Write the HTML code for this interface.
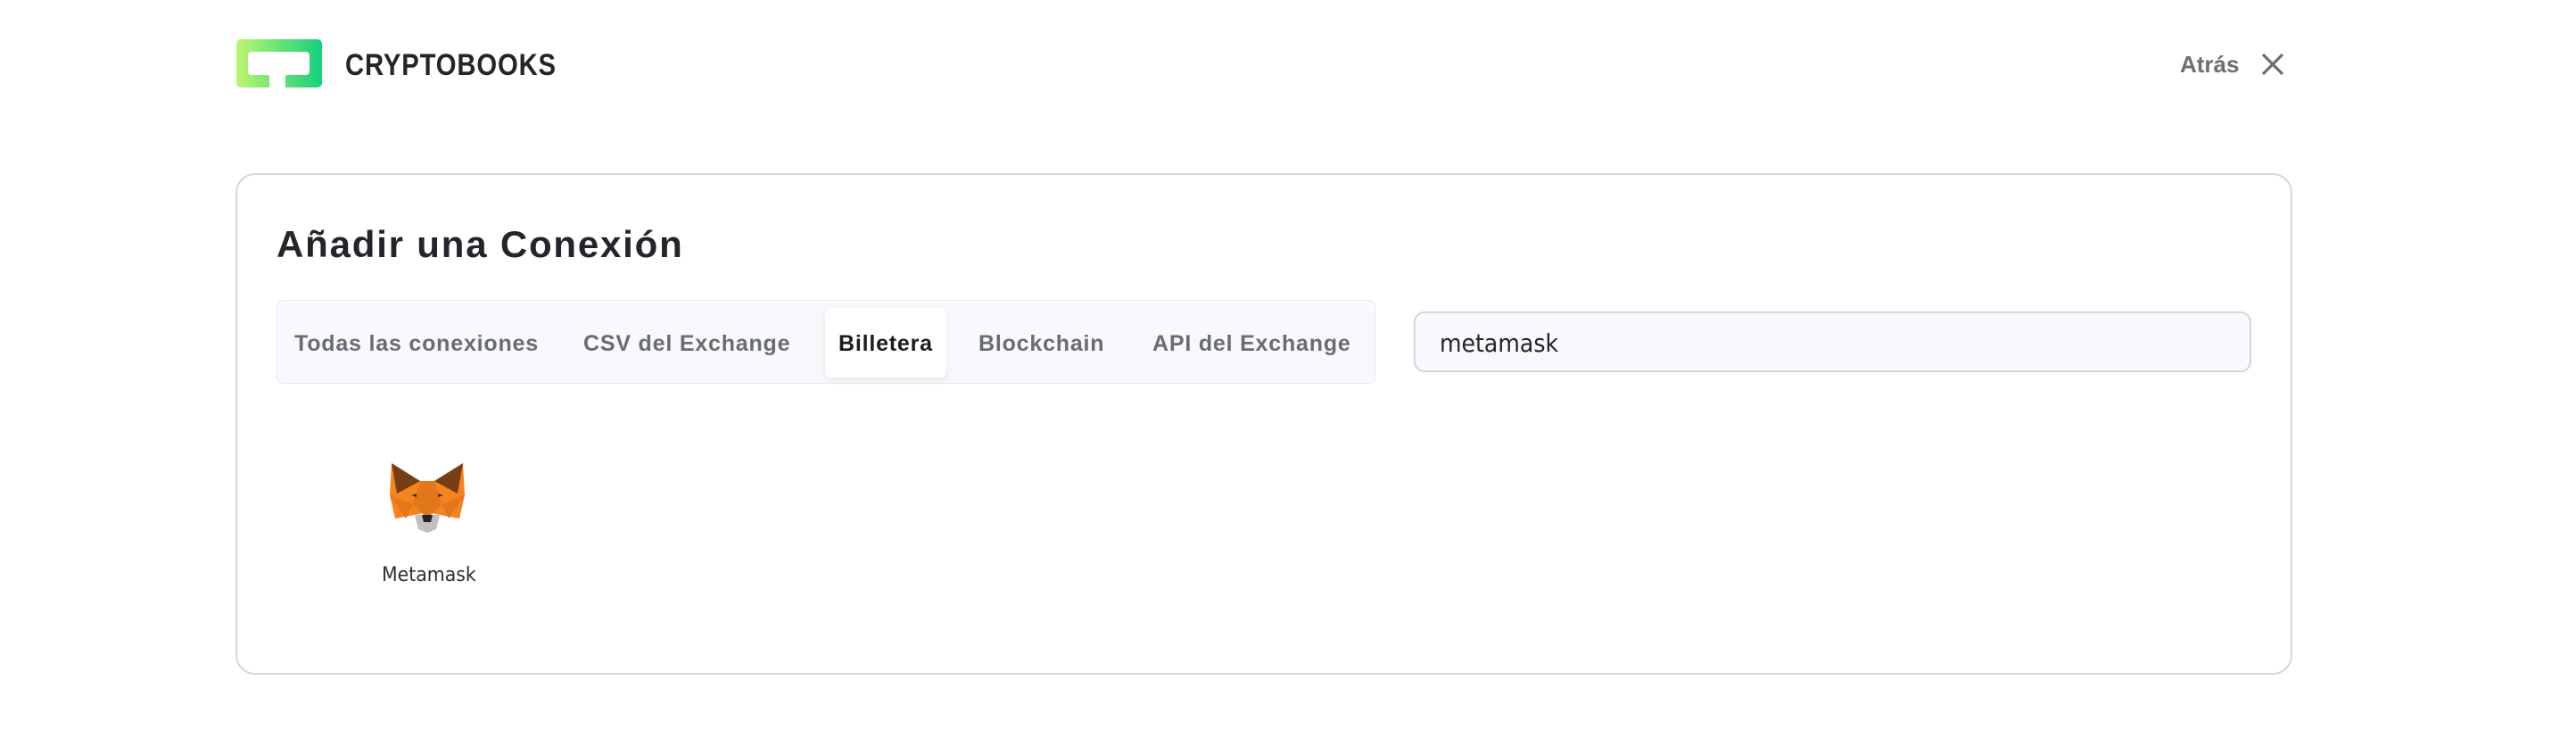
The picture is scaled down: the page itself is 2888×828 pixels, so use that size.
<!DOCTYPE html>
<html><head><meta charset="utf-8"><style>
body{margin:0;width:2888px;height:828px;background:#fff;font-family:"Liberation Sans",sans-serif;position:relative;overflow:hidden}
.abs{position:absolute}
.card{left:264px;top:194px;width:2302px;height:558px;border:2px solid #d6d4e0;border-radius:22px;box-sizing:content-box}
.tabs{left:310px;top:336px;width:1230px;height:92px;background:#f8f9fc;border:1.5px solid #e8e9f0;border-radius:8px}
.tab{position:absolute;top:373px;font-size:25px;font-weight:bold;color:#6a6c73;line-height:1;white-space:nowrap;letter-spacing:0.8px}
</style></head><body>
<svg class="abs" style="left:265px;top:44px" width="96" height="54" viewBox="0 0 96 54">
<defs><linearGradient id="g" x1="0" x2="1"><stop offset="0" stop-color="#bdf571"/><stop offset="1" stop-color="#14d07d"/></linearGradient></defs>
<path fill="url(#g)" fill-rule="evenodd" d="M5 0H91A5 5 0 0 1 96 5V49A5 5 0 0 1 91 54H55V42A2 2 0 0 1 57 40H78A4 4 0 0 0 82 36V18A4 4 0 0 0 78 14H17A4 4 0 0 0 13 18V36A4 4 0 0 0 17 40H35A2 2 0 0 1 37 42V54H5A5 5 0 0 1 0 49V5A5 5 0 0 1 5 0Z"/>
</svg>
<div class="abs" style="left:387px;top:54px;font-size:34px;font-weight:bold;color:#23252b;transform:scaleX(0.86);transform-origin:left;letter-spacing:1px">CRYPTOBOOKS</div>
<div class="abs" style="left:2444px;top:57px;font-size:26px;font-weight:bold;color:#6b6e75">Atrás</div>
<svg class="abs" style="left:2535px;top:59px" width="26" height="26" viewBox="0 0 26 26"><path d="M2 2L24 24M24 2L2 24" stroke="#6b6e75" stroke-width="3.2"/></svg>
<div class="abs card"></div>
<div class="abs" style="left:310px;top:250px;font-size:42px;font-weight:bold;color:#23252b;letter-spacing:1.8px">Añadir una Conexión</div>
<div class="abs tabs"></div>
<div class="abs" style="left:925px;top:345px;width:136px;height:78px;background:#fff;border-radius:7px;box-shadow:0 3px 8px rgba(0,0,0,0.08)"></div>
<div class="tab" style="left:330px">Todas las conexiones</div>
<div class="tab" style="left:654px">CSV del Exchange</div>
<div class="tab" style="left:940px;color:#1b1c20">Billetera</div>
<div class="tab" style="left:1097px">Blockchain</div>
<div class="tab" style="left:1292px">API del Exchange</div>
<div class="abs" style="left:1585px;top:349px;width:939px;height:68px;box-sizing:border-box;border:2px solid #d4d4e2;border-radius:12px;background:#f8f9fd"></div>
<div class="abs" style="left:1614px;top:368px;font-size:28px;color:#23252b;font-family:'DejaVu Sans','Liberation Sans',sans-serif;transform:scaleX(0.9);transform-origin:left">metamask</div>
<svg class="abs" style="left:435px;top:515px" width="88" height="84" viewBox="0 0 88 84">
<polygon points="4,4 36,24 40,60 8,66 2,40" fill="#f5841f"/>
<polygon points="84,4 52,24 48,60 80,66 86,40" fill="#f5841f"/>
<polygon points="36,24 52,24 60,50 44,66 28,50" fill="#e2761b"/>
<polygon points="4,4 36,24 10,38" fill="#763d16"/>
<polygon points="84,4 52,24 78,38" fill="#763d16"/>
<polygon points="2,40 28,50 20,66" fill="#e4761b"/>
<polygon points="86,40 60,50 68,66" fill="#e4761b"/>
<polygon points="30,62 58,62 54,78 44,82 34,78" fill="#c0c0c0"/>
<polygon points="38,62 50,62 48,70 40,70" fill="#222"/>
<polygon points="26,40 32,38 32,42" fill="#333"/>
<polygon points="62,40 56,38 56,42" fill="#333"/>
</svg>
<div class="abs" style="left:428px;top:632px;font-size:22px;color:#2d2f36;font-family:'DejaVu Sans','Liberation Sans',sans-serif;transform:scaleX(0.93);transform-origin:left">Metamask</div>
</body></html>
